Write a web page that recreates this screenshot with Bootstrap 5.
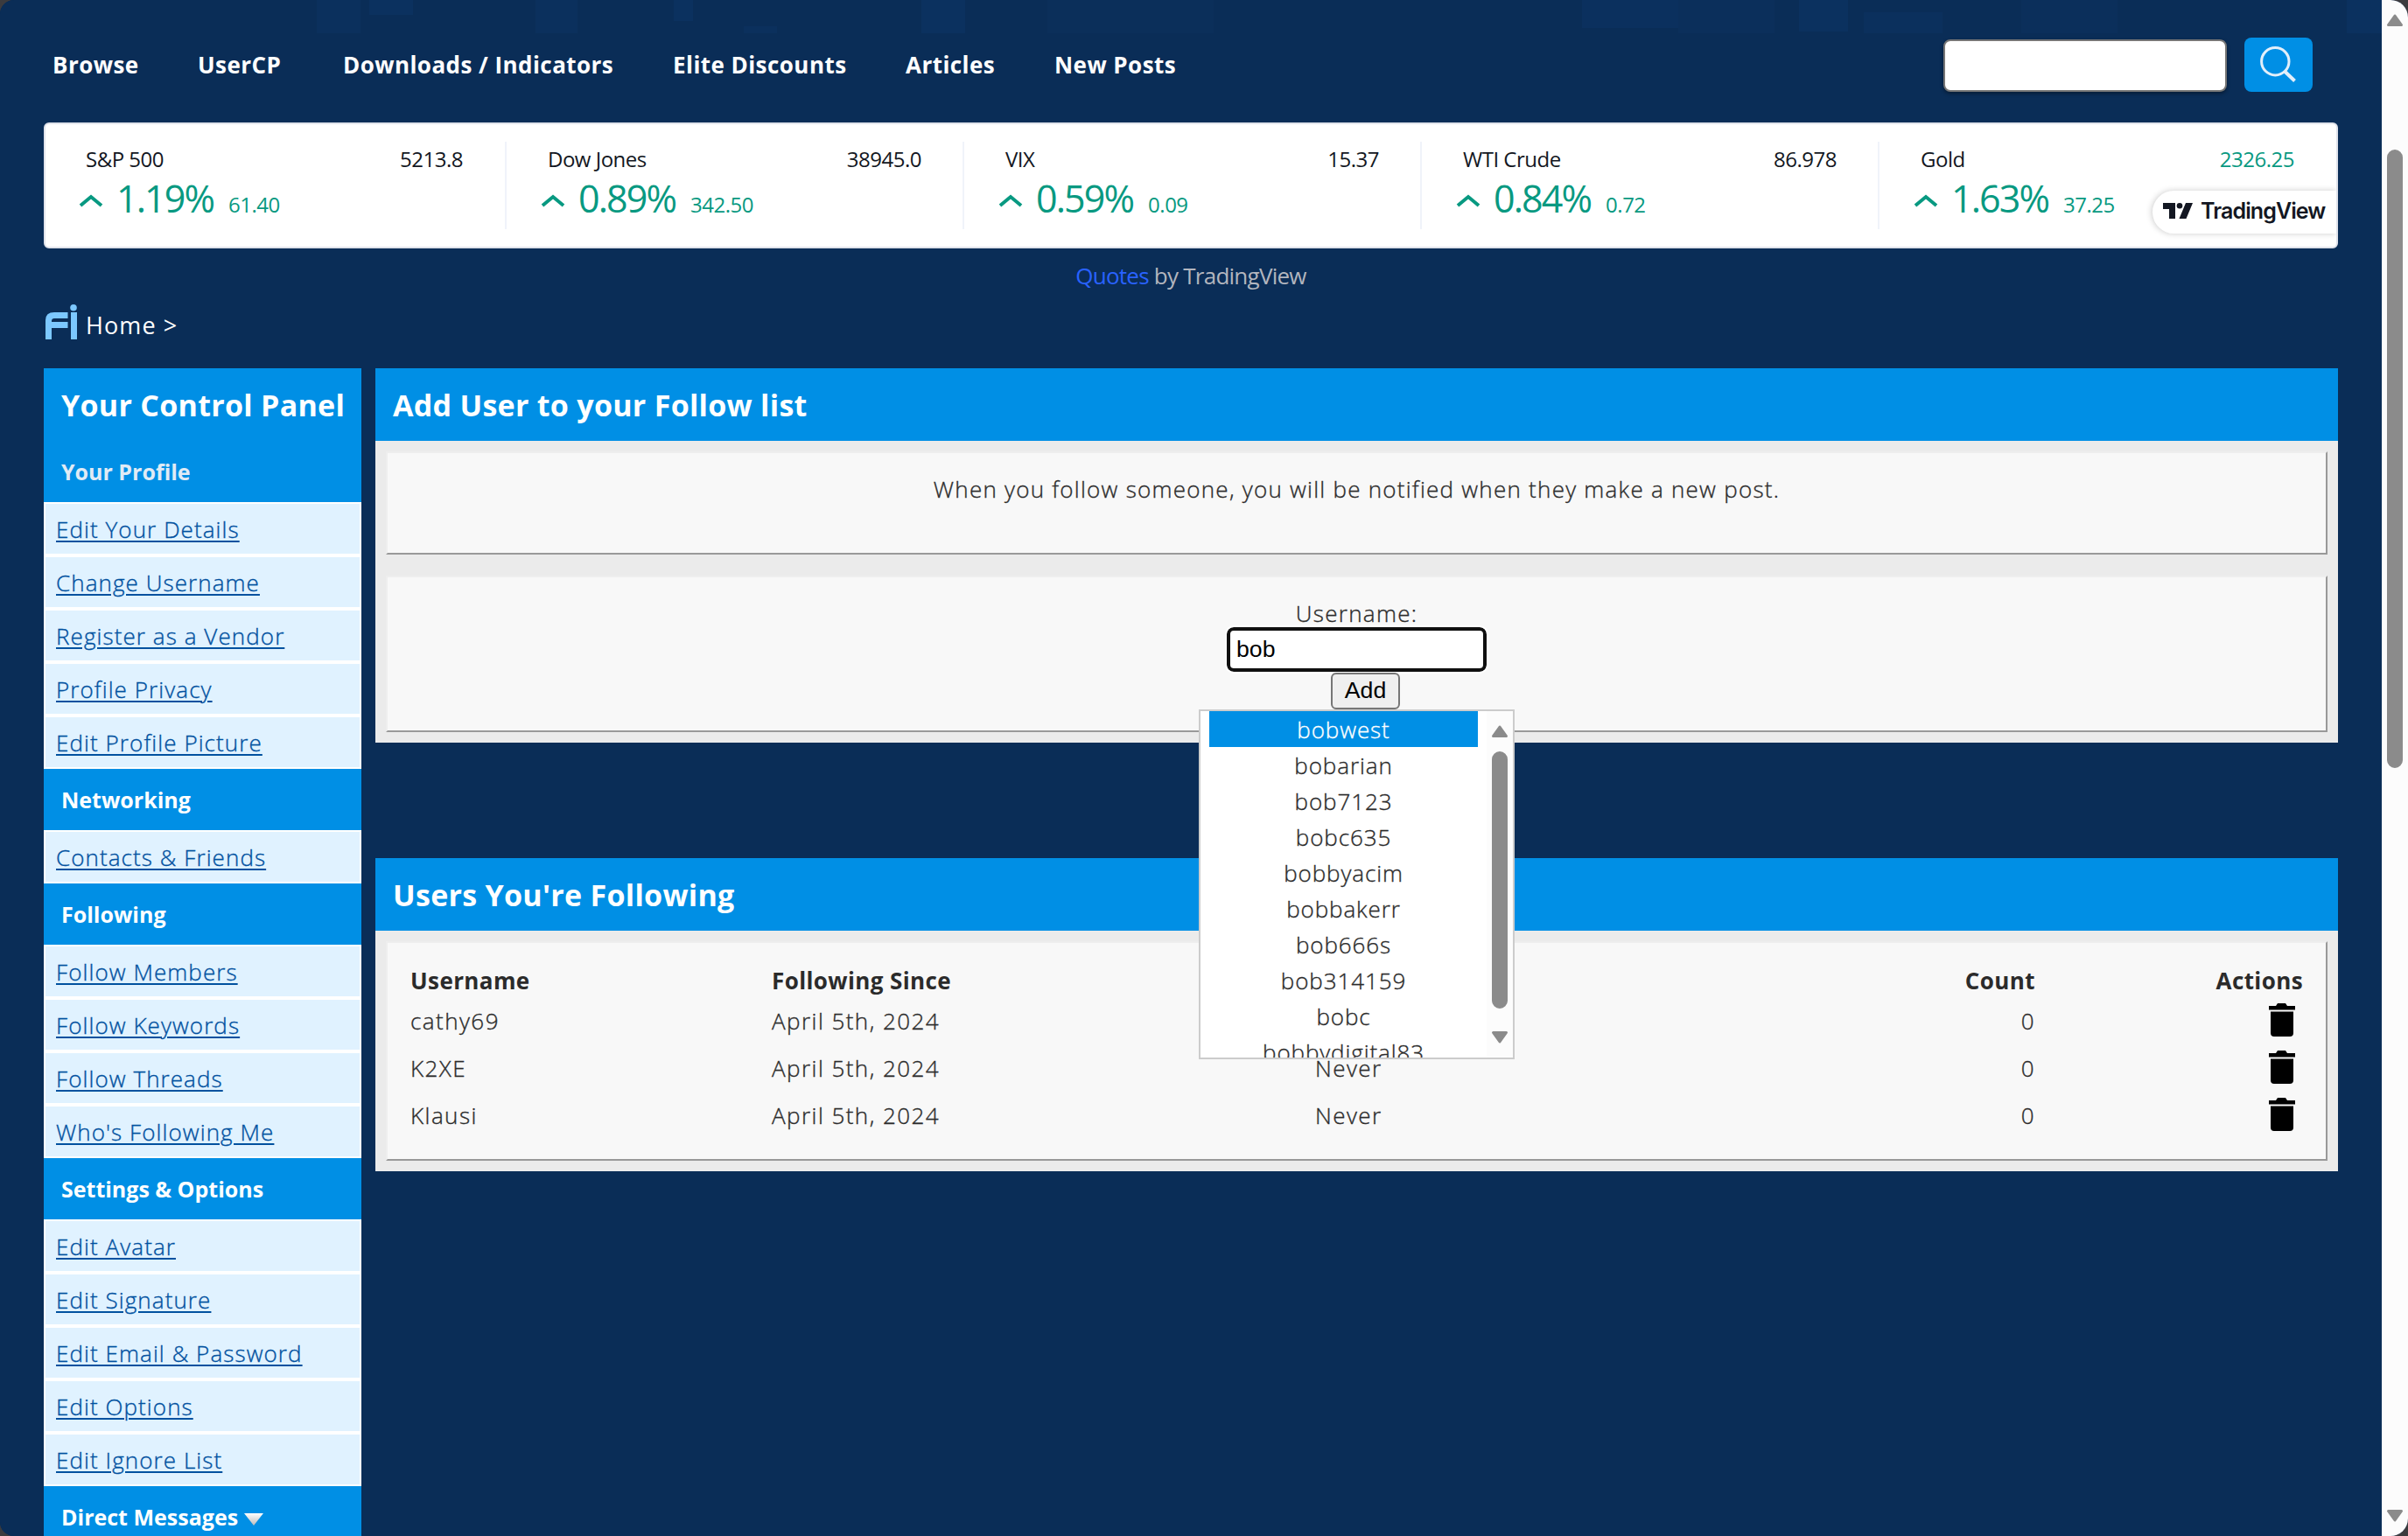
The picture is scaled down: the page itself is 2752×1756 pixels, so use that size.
<!DOCTYPE html>
<html lang="en">
<head>
<meta charset="utf-8">
<title>Follow List</title>
<link rel="stylesheet" href="https://cdn.jsdelivr.net/npm/bootstrap@5.3.0/dist/css/bootstrap.min.css">
<style>
html{background:#3b3b3e}
body{width:2752px;height:1756px;overflow:hidden;margin:0;background:#3b3b3e;font:300 26px/36px "Open Sans","Noto Sans",sans-serif;color:#2b2b2b}
.window{width:2752px;height:1756px;border-radius:16px 20px 20px 16px;overflow:hidden;background:#0a2d57}
.page{width:2722px;padding:0 50px;overflow:hidden;height:1756px;
 background:
 linear-gradient(#0b305d,#0b305d) 362px 0/50px 38px no-repeat,
 linear-gradient(#0b315f,#0b315f) 422px 0/50px 17px no-repeat,
 linear-gradient(#0b305d,#0b305d) 612px 0/48px 38px no-repeat,
 linear-gradient(#0b315f,#0b315f) 770px 0/22px 24px no-repeat,
 linear-gradient(#0b305d,#0b305d) 850px 30px/38px 8px no-repeat,
 linear-gradient(#0b315f,#0b315f) 1053px 0/50px 38px no-repeat,
 linear-gradient(#0b2f5a,#0b2f5a) 1197px 0/190px 38px no-repeat,
 linear-gradient(#0b305e,#0b305e) 1808px 0/110px 32px no-repeat,
 linear-gradient(#0b2f5b,#0b2f5b) 1918px 0/110px 38px no-repeat,
 linear-gradient(#0b315f,#0b315f) 2056px 0/56px 36px no-repeat,
 linear-gradient(#0b305d,#0b305d) 2130px 14px/90px 24px no-repeat,
 linear-gradient(#0b2f5b,#0b2f5b) 2310px 0/110px 38px no-repeat,
 linear-gradient(#0b315f,#0b315f) 2682px 0/40px 38px no-repeat,#0a2d57}
.topbar{height:140px;padding:0 29px 0 10px}
.topbar nav{padding-top:7px}
.topbar nav a{color:#fff;font-weight:700;text-decoration:none;white-space:nowrap;letter-spacing:.45px}
.w1{width:166px}.w2{width:166px}.w3{width:377px}.w4{width:266px}.w5{width:170px}
.searchbox{width:324px;height:60px;border:2px solid #767676;border-radius:8px;background:#fff;margin-top:10px;box-shadow:0 2px 4px #0006;padding:0}
.searchbtn{width:78px;height:62px;border-radius:8px;background:#008fe5;border:0;padding:0;margin:8px 0 0 20px}
.ticker{height:144px;background:#fff;border:2px solid #e0e3eb;border-radius:6px;font-weight:400;color:#131722;position:relative}
.quote{width:523px;height:100px;margin-top:20px;padding:4px 47px 0 46px;font-size:24px;line-height:32px;letter-spacing:-.5px}
.quote:first-child{width:525px;padding-right:48px}
.quote:last-of-type{flex:1}
.quote+.quote{border-left:2px solid #f0f3fa;padding-left:47px}
.up{color:#089981}
.quote .pct{font-size:43px;line-height:58px;letter-spacing:-1.900px;margin:0 17px 0 15px}
.quote svg{margin:24px 0 0 -8px}
.tvbadge{position:absolute;right:0;top:76px;width:210px;height:49px;border-radius:25px 0 0 25px;background:#fff;box-shadow:-1px 0 7px #0003;clip-path:inset(-10px 0 -10px -10px);font:600 25px/46px Inter,sans-serif;letter-spacing:-.9px;color:#131722;padding:0 0 3px 12px}
.tvbadge span{margin-left:9px}
.credit{height:64px;line-height:62px;color:#b2b5be;font-weight:400;letter-spacing:-.75px}
.credit span{color:#2962ff}
.crumb{height:73px;color:#fff;padding:0 0 0 2px}
.home{margin:6px 0 0 10px;font-size:27px;font-weight:400;letter-spacing:1.1px}
.side{width:363px}
.title-bar{background:#008fe5;color:#fff;height:83px;line-height:85px;font-size:34px;font-weight:700;padding-left:20px;margin:0;white-space:nowrap;letter-spacing:.28px}
.sec{background:#008fe5;color:#fff;height:70px;line-height:71px;font-size:25px;font-weight:700;padding-left:20px}
.sec.dim{color:#e0ebf5}
.side a{display:block;height:61px;border:2px solid #fff;background:#e0f2ff;color:#00519f;line-height:59px;padding-left:12px;text-decoration:underline;text-decoration-thickness:2px;text-underline-offset:3px;letter-spacing:1.08px;-webkit-text-stroke:.35px #00519f}
.main{width:2243px}
.panelbody{background:#ebebeb;padding:12px}
.inset{background:#f8f8f8;border:2px solid;border-color:#eee #999 #999 #eee}
.note{height:118px;padding-top:23px;letter-spacing:1.25px}
.note,.ulabel,.follow td,.suggest .names div{-webkit-text-stroke:.35px currentColor}
.formbox{height:179px;margin-top:24px;padding-top:23px}
.ulabel{height:34px;letter-spacing:1.3px}
.second{margin-top:132px}
.listbox{height:251px;padding:24px 0 0 26px}
.follow{width:2163px;table-layout:fixed;margin:0;color:#2b2b2b}
.follow td,.follow th{padding:0;background:none;border:0;color:#2b2b2b;white-space:nowrap;letter-spacing:.4px}
.follow td{height:54px;line-height:54px;font-weight:300;letter-spacing:1.45px}
.follow th{height:38px;line-height:38px;font-weight:700;vertical-align:top}
.trash{width:30px;height:38px;margin:7px 0 0 267px}
.userbox{width:297px;height:51px;border:4px solid #101010;border-radius:8px;background:#fff;font:400 26.67px/40px "Liberation Sans",Arial,sans-serif;padding:0 0 1px 7px;color:#000;outline:2px solid #fff;display:block}
.addbtn{width:79px;height:42px;border:2px solid #767676;border-radius:6px;background:#efefef;font:400 26.67px/34px "Liberation Sans",Arial,sans-serif;color:#000;padding:0 0 2px;margin:1px 0 0 20px}
.suggest{position:absolute;left:927px;top:151px;width:361px;height:400px;border:2px solid #ccc;background:#fff;overflow:hidden;z-index:5}
.suggest .names{width:307px;margin-left:10px;text-align:center}
.suggest .names div{height:41px;line-height:43px;letter-spacing:.9px}
.suggest .names .sel{background:#008fe5;color:#fff}
.lbar{width:30px;background:#fcfcfc;margin-left:auto}
.pagebar{width:30px;background:#fcfcfc}
.caret{margin:31px 0 0 7px}
svg{display:block;flex:none}
</style>
<script src="https://cdn.jsdelivr.net/npm/bootstrap@5.3.0/dist/js/bootstrap.bundle.min.js"></script>
</head>
<body>
<div class="window d-flex">
<div class="page">
 <header class="topbar d-flex align-items-center">
  <nav class="d-flex"><a href="#" class="w1">Browse</a><a href="#" class="w2">UserCP</a><a href="#" class="w3">Downloads / Indicators</a><a href="#" class="w4">Elite Discounts</a><a href="#" class="w5">Articles</a><a href="#">New Posts</a></nav>
  <input class="searchbox ms-auto" aria-label="Search">
  <button class="searchbtn" aria-label="Go"><svg width="78" height="62" fill="none" stroke="#e3effa" stroke-width="3"><circle cx="35.3" cy="27.2" r="15.7"/><path d="M46 38.500l11.500 11" stroke-width="4"/></svg></button>
 </header>
 <section class="ticker d-flex">
  <div class="quote"><div class="d-flex justify-content-between"><span>S&amp;P 500</span><span>5213.8</span></div><div class="d-flex up align-items-start"><svg width="28" height="16" viewBox="0 0 28 16"><path d="M2 13L14 3l12 10" fill="none" stroke="#089981" stroke-width="4"/></svg><div class="d-flex align-items-baseline"><span class="pct">1.19%</span><span>61.40</span></div></div></div>
  <div class="quote"><div class="d-flex justify-content-between"><span>Dow Jones</span><span>38945.0</span></div><div class="d-flex up align-items-start"><svg width="28" height="16" viewBox="0 0 28 16"><path d="M2 13L14 3l12 10" fill="none" stroke="#089981" stroke-width="4"/></svg><div class="d-flex align-items-baseline"><span class="pct">0.89%</span><span>342.50</span></div></div></div>
  <div class="quote"><div class="d-flex justify-content-between"><span>VIX</span><span>15.37</span></div><div class="d-flex up align-items-start"><svg width="28" height="16" viewBox="0 0 28 16"><path d="M2 13L14 3l12 10" fill="none" stroke="#089981" stroke-width="4"/></svg><div class="d-flex align-items-baseline"><span class="pct">0.59%</span><span>0.09</span></div></div></div>
  <div class="quote"><div class="d-flex justify-content-between"><span>WTI Crude</span><span>86.978</span></div><div class="d-flex up align-items-start"><svg width="28" height="16" viewBox="0 0 28 16"><path d="M2 13L14 3l12 10" fill="none" stroke="#089981" stroke-width="4"/></svg><div class="d-flex align-items-baseline"><span class="pct">0.84%</span><span>0.72</span></div></div></div>
  <div class="quote"><div class="d-flex justify-content-between"><span>Gold</span><span class="up">2326.25</span></div><div class="d-flex up align-items-start"><svg width="28" height="16" viewBox="0 0 28 16"><path d="M2 13L14 3l12 10" fill="none" stroke="#089981" stroke-width="4"/></svg><div class="d-flex align-items-baseline"><span class="pct">1.63%</span><span>37.25</span></div></div></div>
  <div class="tvbadge d-flex align-items-center"><svg width="34" height="18" viewBox="0 0 34 18" fill="#131722"><path d="M0 0h14v18H7V7H0zM26 0h8l-7.500 18h-8z"/><circle cx="19" cy="3.300" r="3.300"/></svg><span>TradingView</span></div>
 </section>
 <div class="credit text-center"><span>Quotes</span> by TradingView</div>
 <div class="crumb d-flex"><svg width="36" height="40" viewBox="0 0 36 40" fill="#7cc8ff"><path d="M0 40V18Q0 9 10 9H25.500v7H10q-3 0-3 3v1H25.500v7H7V40zM29 9h7v31h-7z"/><circle cx="32" cy="3.800" r="3.800"/></svg><span class="home">Home &gt;</span></div>
 <div class="d-flex justify-content-between align-items-start">
  <aside class="side">
   <h2 class="title-bar">Your Control Panel</h2>
   <div class="sec dim">Your Profile</div>
   <a href="#">Edit Your Details</a><a href="#">Change Username</a><a href="#">Register as a Vendor</a><a href="#">Profile Privacy</a><a href="#">Edit Profile Picture</a>
   <div class="sec">Networking</div>
   <a href="#">Contacts &amp; Friends</a>
   <div class="sec">Following</div>
   <a href="#">Follow Members</a><a href="#">Follow Keywords</a><a href="#">Follow Threads</a><a href="#">Who's Following Me</a>
   <div class="sec">Settings &amp; Options</div>
   <a href="#">Edit Avatar</a><a href="#">Edit Signature</a><a href="#">Edit Email &amp; Password</a><a href="#">Edit Options</a><a href="#">Edit Ignore List</a>
   <div class="sec d-flex">Direct Messages<svg class="caret" width="22" height="14"><defs><linearGradient id="g" x2="0" y2="1"><stop stop-color="#fff"/><stop offset="1" stop-color="#bbb"/></linearGradient></defs><path d="M0 0h22L11 14z" fill="url(#g)"/></svg></div>
  </aside>
  <main class="main">
   <section>
    <h2 class="title-bar">Add User to your Follow list</h2>
    <div class="panelbody">
     <div class="inset text-center note">When you follow someone, you will be notified when they make a new post.</div>
     <div class="inset formbox position-relative d-flex flex-column align-items-center">
      <label class="ulabel" for="u">Username:</label>
      <input id="u" class="userbox" value="bob">
      <button class="addbtn">Add</button>
      <div class="suggest d-flex">
       <div class="names"><div class="sel">bobwest</div><div>bobarian</div><div>bob7123</div><div>bobc635</div><div>bobbyacim</div><div>bobbakerr</div><div>bob666s</div><div>bob314159</div><div>bobc</div><div>bobbydigital83</div></div>
       <div class="lbar"><svg width="30" height="396" fill="#8b8b8b" stroke="#8b8b8b" stroke-linejoin="round" stroke-width="3"><path d="M7.500 28.500L15 18l7.500 10.500z"/><rect x="7.500" y="47.500" width="15" height="291" rx="7.500"/><path d="M7.500 367.500L15 378l7.500-10.500z"/></svg></div>
      </div>
     </div>
    </div>
   </section>
   <section class="second">
    <h2 class="title-bar">Users You're Following</h2>
    <div class="panelbody">
     <div class="inset listbox">
      <table class="table table-borderless follow">
       <colgroup><col style="width:413px"><col style="width:621px"><col style="width:502px"><col style="width:321px"><col style="width:306px"></colgroup>
       <thead><tr><th>Username</th><th>Following Since</th><th></th><th class="text-end">Count</th><th class="text-end">Actions</th></tr></thead>
       <tbody>
        <tr><td>cathy69</td><td>April 5th, 2024</td><td></td><td class="text-end">0</td><td><svg class="trash" viewBox="0 0 30 38"><path d="M0 3h8l2-3h9l2 3h9v4.500H0zM2 9.500h26V34q0 4-4 4H6q-4 0-4-4z"/></svg></td></tr>
        <tr><td>K2XE</td><td>April 5th, 2024</td><td>Never</td><td class="text-end">0</td><td><svg class="trash" viewBox="0 0 30 38"><path d="M0 3h8l2-3h9l2 3h9v4.500H0zM2 9.500h26V34q0 4-4 4H6q-4 0-4-4z"/></svg></td></tr>
        <tr><td>Klausi</td><td>April 5th, 2024</td><td>Never</td><td class="text-end">0</td><td><svg class="trash" viewBox="0 0 30 38"><path d="M0 3h8l2-3h9l2 3h9v4.500H0zM2 9.500h26V34q0 4-4 4H6q-4 0-4-4z"/></svg></td></tr>
       </tbody>
      </table>
     </div>
    </div>
   </section>
  </main>
 </div>
</div>
<div class="pagebar"><svg width="30" height="1756" fill="#8b8b8b" stroke="#8b8b8b" stroke-linejoin="round" stroke-width="3"><path d="M7.500 28.500L15 18l7.500 10.500z"/><rect x="7.500" y="172.500" width="15" height="704" rx="7.500"/><path d="M7.500 1727.500L15 1738l7.500-10.500z"/></svg></div>
</div>
</body>
</html>
